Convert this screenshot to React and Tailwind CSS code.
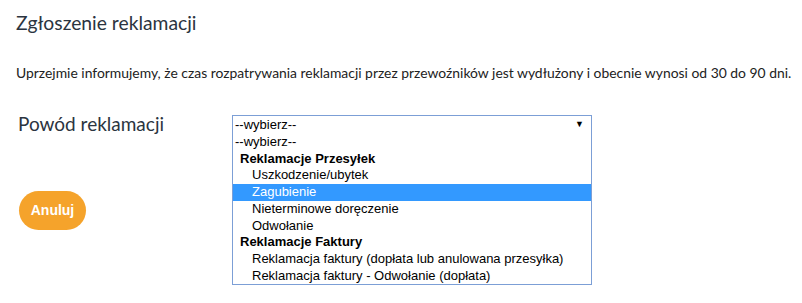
const GROUPS = [
  {
    label: 'Reklamacje Przesyłek',
    options: ['Uszkodzenie/ubytek', 'Zagubienie', 'Nieterminowe doręczenie', 'Odwołanie'],
  },
  {
    label: 'Reklamacje Faktury',
    options: [
      'Reklamacja faktury (dopłata lub anulowana przesyłka)',
      'Reklamacja faktury - Odwołanie (dopłata)',
    ],
  },
];

const SELECTED = 'Zagubienie';

export default function App() {
  return (
    <div className="w-[802px] h-[303px] bg-white overflow-hidden font-['Lato',sans-serif] text-[#2b3440]">
      <div className="px-4 pt-[9px]">
        <h1 className="text-[19.3px] leading-[28px]">Zgłoszenie reklamacji</h1>
        <p className="mt-[26px] text-[13.9px] leading-[20px] text-[#222] whitespace-nowrap">
          Uprzejmie informujemy, że czas rozpatrywania reklamacji przez przewoźników jest wydłużony i obecnie wynosi od 30 do 90 dni.
        </p>

        <div className="mt-[29px] flex items-start">
          <label className="w-[216px] pl-[2px] text-[19px] leading-[24px] text-[#2b3440]">Powód reklamacji</label>

          <div className="relative mt-[3px] w-[360px]">
            {/* closed select */}
            <div className="h-[20px] border border-[#7c9fd6] flex items-center justify-between pl-[2px] pr-[7px] font-['Liberation_Sans',Arial,sans-serif] text-[13px] text-black">
              <span>--wybierz--</span>
              <span className="text-[9px]">▼</span>
            </div>

            {/* open list */}
            <div className="absolute left-0 top-[19px] w-full border border-[#7c9fd6] border-t-0 bg-white font-['Liberation_Sans',Arial,sans-serif] text-[13px] text-black leading-[16.7px]">
              <div className="pl-[2px]">--wybierz--</div>
              {GROUPS.map(({ label, options }) => (
                <div key={label}>
                  <div className="pl-[7px] font-bold">{label}</div>
                  {options.map(o => (
                    <div
                      key={o}
                      className={o === SELECTED ? 'pl-[19px] bg-[#3399ff] text-white' : 'pl-[19px]'}
                    >
                      {o}
                    </div>
                  ))}
                </div>
              ))}
            </div>
          </div>
        </div>

        <button className="mt-[55px] ml-[3px] w-[67px] h-[39px] rounded-full bg-[#f5a32b] text-white font-bold text-[14px] font-['Liberation_Sans',Arial,sans-serif]">
          Anuluj
        </button>
      </div>
    </div>
  );
}
